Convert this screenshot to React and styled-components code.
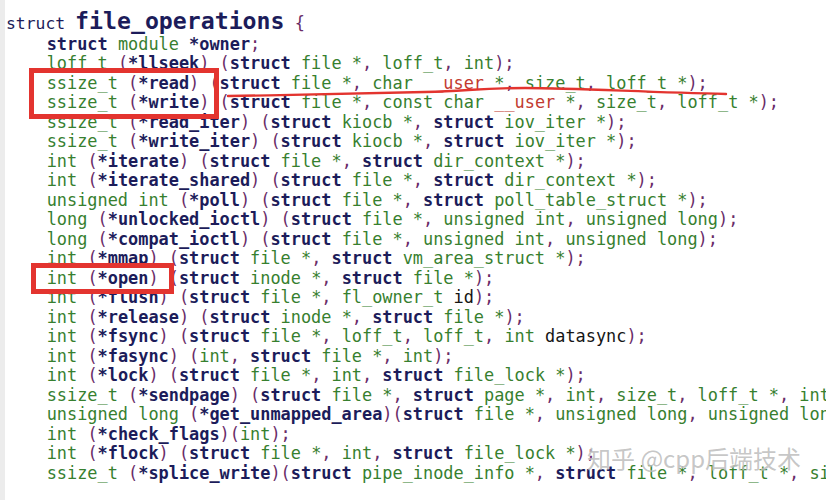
import React from 'react';
import styled, { createGlobalStyle } from 'styled-components';

const GlobalStyle = createGlobalStyle`
  html, body {
    margin: 0;
    padding: 0;
    background: #fff;
  }
`;

const colors = {
  kw: '#1c1c5a',
  fn: '#1c1c5a',
  type: '#37802f',
  punct: '#6a2c68',
  red: '#c23a30',
  plain: '#151515',
  mark: '#e3342f',
};

const Page = styled.div`
  position: relative;
  display: flex;
  flex-direction: column;
  width: 826px;
  height: 500px;
  overflow: hidden;
  box-sizing: border-box;
  padding: 8px 0 0 6px;
  background: #fff;
  box-shadow: inset 5px 0 0 #ececec;
  font-family: "DejaVu Sans Mono", "Liberation Mono", monospace;
`;

const TitleLine = styled.div`
  flex: none;
  height: 26.8px;
  line-height: 25px;
  white-space: pre;
  color: ${colors.kw};
`;

const TitleKeyword = styled.span`
  font-size: 16.4px;
  line-height: 1;
`;

const TitleName = styled.span`
  font-size: 23.2px;
  font-weight: bold;
`;

const TitleBrace = styled.span`
  font-size: 16.9px;
  line-height: 1;
  color: ${colors.punct};
`;

const CodeLine = styled.div`
  flex: none;
  height: 19.5px;
  line-height: 19.5px;
  font-size: 16.9px;
  white-space: pre;
`;

const Token = styled.span`
  color: ${({ $kind }) => colors[$kind]};
  font-weight: ${({ $kind }) => ($kind === 'kw' || $kind === 'fn' ? 'bold' : 'normal')};
`;

const MarkBox = styled.div`
  position: absolute;
  box-sizing: border-box;
  border: 5px solid ${colors.mark};
`;

const Scribble = styled.svg`
  position: absolute;
  left: 0;
  top: 0;
  pointer-events: none;
`;

const Watermark = styled.div`
  position: absolute;
  left: 587px;
  top: 445px;
  font-family: "Noto Sans CJK SC", "Noto Sans", sans-serif;
  font-size: 24px;
  line-height: 26px;
  white-space: pre;
  color: rgba(150, 150, 150, 0.55);
  text-shadow: 0 0 1px rgba(255, 255, 255, 0.8);
`;

const lines = [
  'struct module *owner;',
  'loff_t (*llseek) (struct file *, loff_t, int);',
  'ssize_t (*read) (struct file *, char __user *, size_t, loff_t *);',
  'ssize_t (*write) (struct file *, const char __user *, size_t, loff_t *);',
  'ssize_t (*read_iter) (struct kiocb *, struct iov_iter *);',
  'ssize_t (*write_iter) (struct kiocb *, struct iov_iter *);',
  'int (*iterate) (struct file *, struct dir_context *);',
  'int (*iterate_shared) (struct file *, struct dir_context *);',
  'unsigned int (*poll) (struct file *, struct poll_table_struct *);',
  'long (*unlocked_ioctl) (struct file *, unsigned int, unsigned long);',
  'long (*compat_ioctl) (struct file *, unsigned int, unsigned long);',
  'int (*mmap) (struct file *, struct vm_area_struct *);',
  'int (*open) (struct inode *, struct file *);',
  'int (*flush) (struct file *, fl_owner_t id);',
  'int (*release) (struct inode *, struct file *);',
  'int (*fsync) (struct file *, loff_t, loff_t, int datasync);',
  'int (*fasync) (int, struct file *, int);',
  'int (*lock) (struct file *, int, struct file_lock *);',
  'ssize_t (*sendpage) (struct file *, struct page *, int, size_t, loff_t *, int);',
  'unsigned long (*get_unmapped_area)(struct file *, unsigned long, unsigned long, unsigned long, unsigned long);',
  'int (*check_flags)(int);',
  'int (*flock) (struct file *, int, struct file_lock *);',
  'ssize_t (*splice_write)(struct pipe_inode_info *, struct file *, loff_t *, size_t, unsigned int);',
];

const params = new Set(['id', 'datasync']);
const isWord = (t) => /^[A-Za-z_]/.test(t);

// crude C highlighter, just enough for this struct
const tokenize = (src) => {
  const parts = src.match(/\s+|[A-Za-z_][A-Za-z0-9_]*|./g) || [];
  return parts.map((t, i) => {
    const prev = parts[i - 1];
    const next = parts[i + 1];
    let kind = 'punct';
    if (/^\s+$/.test(t)) kind = 'plain';
    else if (t === 'struct') kind = 'kw';
    else if (t === '__user') kind = 'red';
    else if (isWord(t)) {
      if (prev === '*') kind = 'fn';
      else if (params.has(t)) kind = 'plain';
      else kind = 'type';
    } else if (t === '*') kind = next && isWord(next) ? 'fn' : 'type';
    return { t, kind };
  });
};

const Code = ({ src }) => (
  <CodeLine>
    {'    '}
    {tokenize(src).map((tok, i) => (
      <Token key={i} $kind={tok.kind}>{tok.t}</Token>
    ))}
  </CodeLine>
);

const App = () => (
  <>
    <GlobalStyle />
    <Page>
      <TitleLine>
        <TitleKeyword>struct </TitleKeyword>
        <TitleName>file_operations</TitleName>
        <TitleBrace> {'{'}</TitleBrace>
      </TitleLine>
      {lines.map((l) => <Code key={l} src={l} />)}

      <MarkBox style={{ left: 29, top: 68, width: 190, height: 51 }} />
      <MarkBox style={{ left: 31, top: 263, width: 143, height: 31 }} />
      <Scribble width="826" height="500" viewBox="0 0 826 500">
        <path
          d="M228 96 C 300 95, 380 93, 425 92 S 475 88, 525 88 S 640 92, 726 94"
          fill="none"
          stroke={colors.mark}
          strokeWidth="2.4"
          strokeLinecap="round"
        />
      </Scribble>
      <Watermark>知乎 @cpp后端技术</Watermark>
    </Page>
  </>
);

export default App;
